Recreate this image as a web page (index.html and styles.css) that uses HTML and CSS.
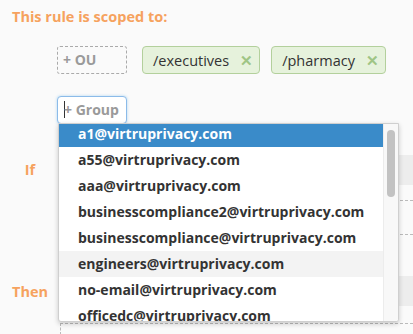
FILE: index.html
```html
<!DOCTYPE html>
<html lang="en">
<head>
  <meta charset="UTF-8">
  <title>Rule scope</title>
  <link rel="stylesheet" href="styles.css">
</head>
<body>

<div class="scope">
  <h2 class="section-title">This rule is scoped to:</h2>

  <div class="ou-row">
    <span class="add-box">+ OU</span>
    <span class="tag">/executives <span class="tag-x">&#x2715;</span></span>
    <span class="tag">/pharmacy <span class="tag-x">&#x2715;</span></span>
  </div>

  <div class="group-wrap">
    <div class="group-input"><span class="caret"></span>+ Group</div>

    <div class="dropdown">
      <ul class="options">
        <li class="selected">a1@virtruprivacy.com</li>
        <li>a55@virtruprivacy.com</li>
        <li>aaa@virtruprivacy.com</li>
        <li>businesscompliance2@virtruprivacy.com</li>
        <li>businesscompliance@virtruprivacy.com</li>
        <li class="hover">engineers@virtruprivacy.com</li>
        <li>no-email@virtruprivacy.com</li>
        <li>officedc@virtruprivacy.com</li>
      </ul>
      <div class="scrollbar"><div class="thumb"></div></div>
    </div>
  </div>
</div>

<div class="cond cond-if">
  <div class="cond-label">If</div>
  <div class="cond-body">
    <div class="grey-box"></div>
    <div class="dash-box"></div>
  </div>
</div>

<div class="cond cond-then">
  <div class="cond-label">Then</div>
  <div class="cond-body">
    <div class="grey-box"></div>
    <div class="dash-box open"></div>
  </div>
</div>

</body>
</html>
```

FILE: styles.css
```css
body {
  font-family: 'Open Sans', 'Liberation Sans', sans-serif;
  background-color: #fafafa;
  margin: 0;
  padding: 0;
  overflow: hidden;
  height: 334px;
}
.scope {
  padding: 8px 12px 0;
}
.section-title {
  margin: 0;
  font-size: 14.5px;
  line-height: 18px;
  font-weight: 700;
  color: #f6a25e;
}
.ou-row {
  display: flex;
  align-items: center;
  margin-top: 20px;
  padding-left: 45px;
}
.add-box {
  box-sizing: border-box;
  width: 70px;
  height: 28px;
  line-height: 26px;
  padding-left: 5px;
  border: 1px dashed #aaa;
  border-radius: 3px;
  font-size: 14px;
  font-weight: 700;
  color: #9a9a9a;
  margin-right: 15px;
}
.tag {
  box-sizing: border-box;
  height: 28px;
  display: flex;
  align-items: center;
  padding: 0 6px 0 10px;
  margin-right: 11px;
  background-color: #e6f2dc;
  border: 1px solid #b3d09c;
  border-radius: 4px;
  font-size: 14.5px;
  color: #333;
}
.tag-x {
  margin-left: 11px;
  color: #9fc585;
  font-size: 15px;
  font-weight: 700;
}
.group-wrap {
  position: relative;
  margin-top: 22px;
  padding-left: 45px;
}
.group-input {
  box-sizing: border-box;
  width: 70px;
  height: 28px;
  line-height: 26px;
  padding-left: 6px;
  border: 1px solid #8cbbe9;
  border-radius: 4px;
  background-color: #fff;
  box-shadow: 0 0 3px rgba(82, 168, 236, 0.45);
  font-size: 14px;
  font-weight: 700;
  color: #9a9a9a;
  white-space: nowrap;
}
.caret {
  display: inline-block;
  width: 1px;
  height: 17px;
  background-color: #333;
  vertical-align: -3px;
  margin-right: -1px;
}
.dropdown {
  position: absolute;
  top: 27px;
  left: 46px;
  width: 341px;
  height: 199px;
  box-sizing: border-box;
  background-color: #fff;
  border: 1px solid #cfcfcf;
  border-radius: 0 0 3px 3px;
  box-shadow: 0 2px 5px rgba(0, 0, 0, 0.2);
  overflow: hidden;
  display: flex;
}
.options {
  list-style: none;
  margin: -3px 0 0;
  padding: 0;
  flex: 1;
}
.options li {
  height: 26px;
  line-height: 26px;
  padding-left: 19px;
  font-size: 14px;
  font-weight: 700;
  color: #333;
  white-space: nowrap;
}
.options li.selected {
  background-color: #3a8bc9;
  color: #fff;
}
.options li.hover {
  background-color: #f3f3f3;
}
.scrollbar {
  width: 15px;
  background-color: #f8f8f8;
  border-left: 1px solid #ececec;
  padding: 6px 0 0 3px;
  box-sizing: border-box;
}
.thumb {
  width: 8px;
  height: 67px;
  border-radius: 4px;
  background-color: #c2c2c2;
}
.cond {
  display: flex;
}
.cond-label {
  width: 60px;
  text-align: center;
  font-size: 14.5px;
  font-weight: 700;
  color: #f6a25e;
}
.cond-body {
  flex: 1;
}
.cond-if {
  margin-top: 31px;
}
.cond-if .cond-label {
  padding-top: 5px;
}
.cond-then {
  margin-top: 41px;
}
.cond-then .cond-label {
  padding-top: 6px;
}
.grey-box {
  height: 30px;
  background-color: #ededed;
}
.dash-box {
  height: 33px;
  margin-top: 15px;
  border-top: 1px dashed #bbb;
  border-bottom: 1px dashed #bbb;
}
.dash-box.open {
  margin-top: 17px;
  height: 11px;
  border-left: 1px dashed #bbb;
  border-bottom: none;
}
```
